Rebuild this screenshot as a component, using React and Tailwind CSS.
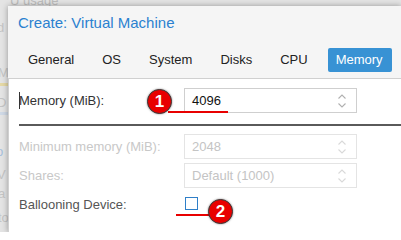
import React from "react";

function Spinner({ disabled }) {
  const c = disabled ? "#d9d9d9" : "#b0b0b0";
  return (
    <svg width="10" height="16" viewBox="0 0 10 16" className="shrink-0">
      <path d="M1.5 5.5 L5 2 L8.5 5.5" fill="none" stroke={c} strokeWidth="1.1" />
      <path d="M1.5 10.5 L5 14 L8.5 10.5" fill="none" stroke={c} strokeWidth="1.1" />
    </svg>
  );
}

function Field({ value, disabled }) {
  return (
    <div
      className={`w-[173px] h-[25px] flex items-center justify-between pl-[7px] pr-[9px] border ${
        disabled ? "border-[#e4e4e4] text-[#c4c4c4]" : "border-[#cfcfcf] text-[#111]"
      } bg-white`}
    >
      <span>{value}</span>
      <Spinner disabled={disabled} />
    </div>
  );
}

function Badge({ n }) {
  return (
    <div className="w-[25px] h-[25px] rounded-full bg-[#e80000] border border-[#3a3a3a] shadow-[0_0_2px_rgba(0,0,0,0.5)] flex items-center justify-center text-white font-bold text-[17px] leading-none">
      {n}
    </div>
  );
}

export default function App() {
  const tabs = ["General", "OS", "System", "Disks", "CPU", "Memory"];
  return (
    <div
      className="relative w-[401px] h-[232px] overflow-hidden bg-[#e4e4e4] pl-[8px] pt-[6px] text-[13px]"
      style={{ fontFamily: '"Liberation Sans", Arial, sans-serif' }}
    >
      {/* background page remnants */}
      <div className="absolute left-[10px] top-[-9px] text-[13px] text-[#bdbdbd]">U usage</div>
      <div className="absolute left-[-3px] top-[18px] text-[13px] text-[#c4c4c4]">d</div>
      <div className="absolute left-[-2px] top-[63px] text-[13px] text-[#c4c4c4]">M</div>
      <div className="absolute left-0 top-[83px] w-[8px] h-[3px] bg-[#e5d9a6]" />
      <div className="absolute left-[-3px] top-[93px] text-[13px] text-[#c4c4c4]">D</div>
      <div className="absolute left-0 top-[112px] w-[8px] h-[3px] bg-[#cfd9e6]" />
      <div className="absolute left-[-4px] top-[142px] text-[13px] text-[#a8c0dc]">o</div>
      <div className="absolute left-[-3px] top-[165px] text-[13px] text-[#c4c4c4]">V</div>
      <div className="absolute left-[-2px] top-[184px] text-[13px] text-[#c4c4c4]">a</div>
      <div className="absolute left-[-2px] top-[208px] text-[13px] text-[#c4c4c4]">to</div>

      {/* dialog */}
      <div className="relative h-full bg-[#f5f5f5] shadow-[0_0_6px_rgba(0,0,0,0.35)] flex flex-col">
        <div className="h-[72px] flex flex-col pl-[10px]">
          <div className="h-[34px] flex items-center text-[15px] text-[#2b81d0] pt-[1px]">
            Create: Virtual Machine
          </div>
          <div className="flex gap-[12px] pl-[2px] mt-[8px]">
            {tabs.map((t) => (
              <div
                key={t}
                className={`h-[24px] px-[8px] flex items-center rounded-[2px] ${
                  t === "Memory" ? "bg-[#3892d4] text-white pr-[9px]" : "text-[#222]"
                }`}
              >
                {t}
              </div>
            ))}
          </div>
        </div>
        <div className="flex-1 bg-white border-t border-l border-[#d0d0d0] pl-[10px] text-[13px]">
          <div className="flex items-center h-[25px] mt-[9px]">
            <div className="w-[165px] flex items-center text-[#333]">
              <span className="w-[1px] h-[17px] bg-[#333] mr-[-1px]" />
              <span>Memory (MiB):</span>
            </div>
            <Field value="4096" />
          </div>
          <div className="h-[2px] bg-[#5a5a5a] mt-[11px]" />
          <div className="flex items-center h-[25px] mt-[8px]">
            <div className="w-[165px] text-[#c8c8c8]">Minimum memory (MiB):</div>
            <Field value="2048" disabled />
          </div>
          <div className="flex items-center h-[25px] mt-[4px]">
            <div className="w-[165px] text-[#c8c8c8]">Shares:</div>
            <Field value="Default (1000)" disabled />
          </div>
          <div className="flex items-center h-[25px] mt-[4px]">
            <div className="w-[166px] text-[#555]">Ballooning Device:</div>
            <div className="w-[13px] h-[13px] border border-[#2f7fc8] bg-white mt-[-2px]" />
          </div>
        </div>

        {/* annotations */}
        <div className="absolute left-[160px] top-[105px] w-[60px] h-[2px] bg-[#e80000]" />
        <div className="absolute left-[139px] top-[83px]">
          <Badge n="1" />
        </div>
        <div className="absolute left-[168px] top-[208px] w-[36px] h-[2px] bg-[#e80000]" />
        <div className="absolute left-[200px] top-[193px]">
          <Badge n="2" />
        </div>
      </div>
    </div>
  );
}
